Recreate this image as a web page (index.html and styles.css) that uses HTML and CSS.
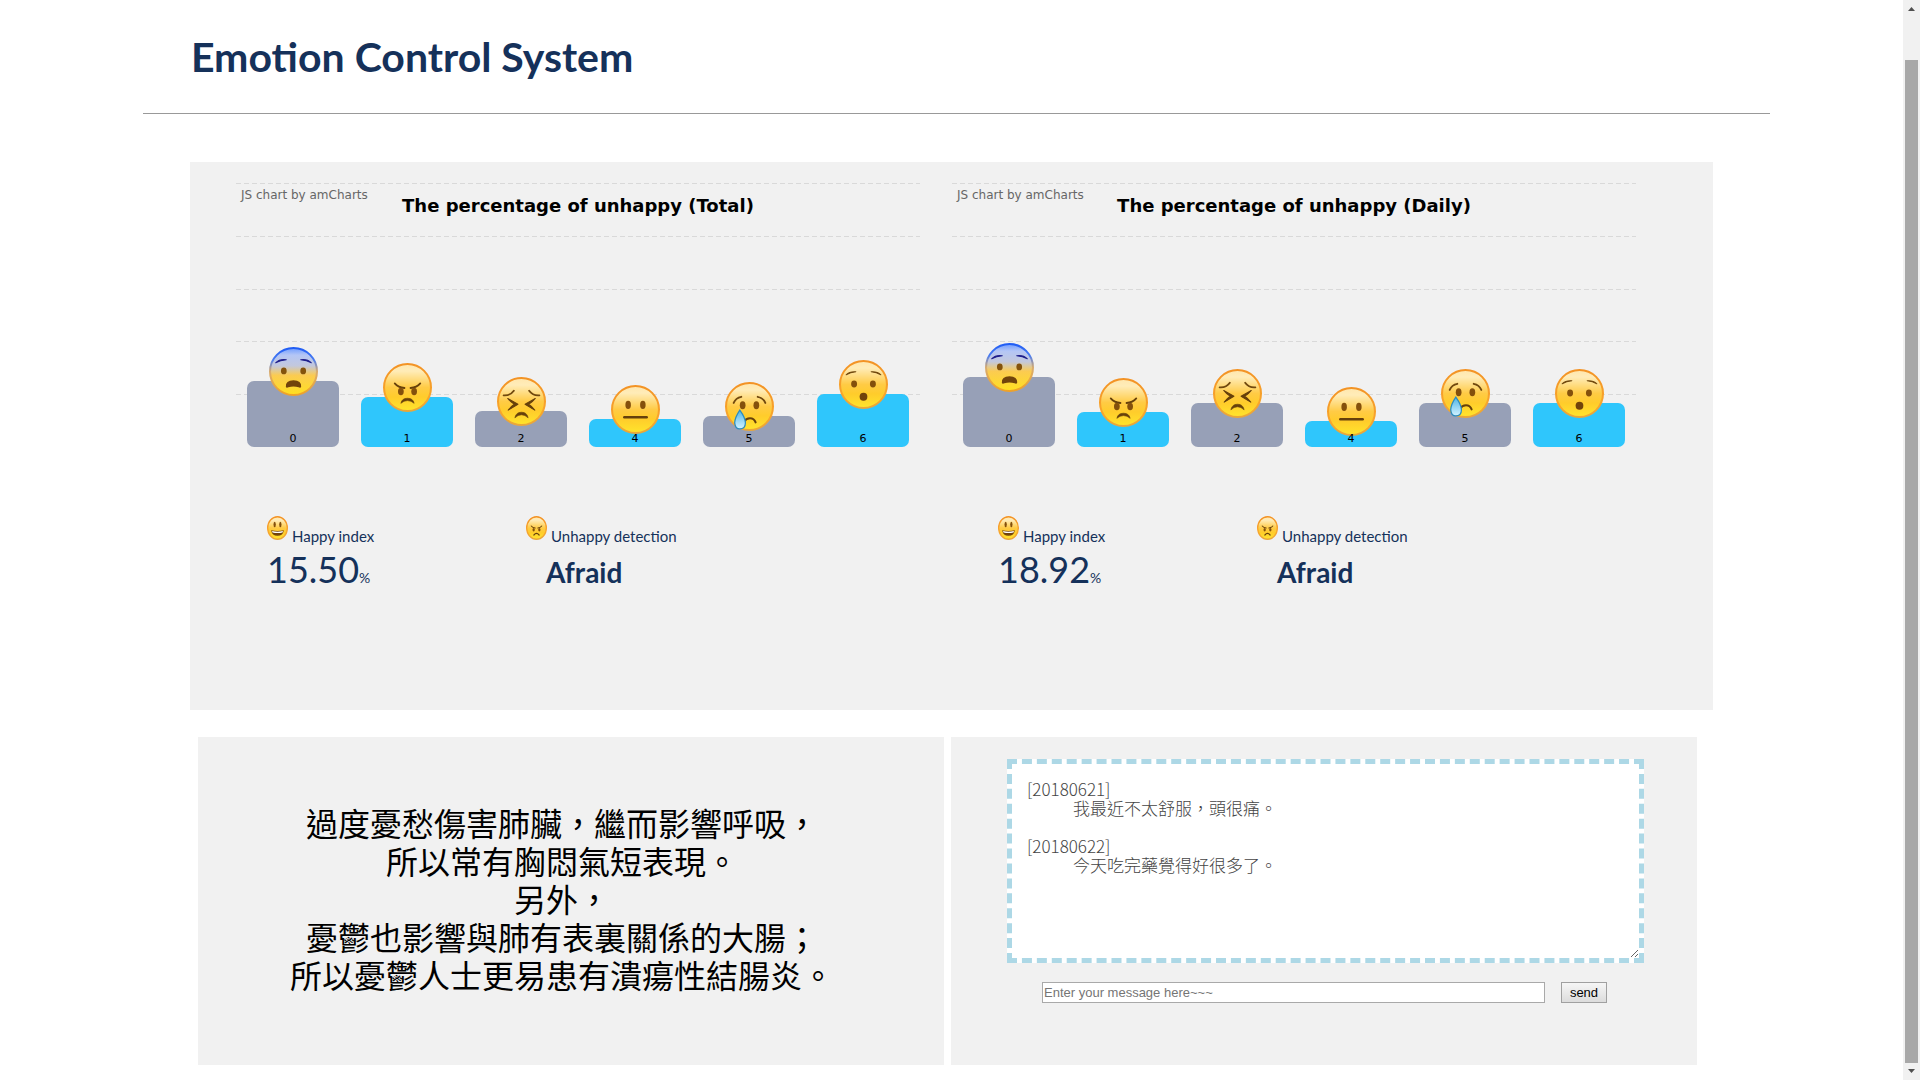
FILE: index.html
```html
<!DOCTYPE html>
<html lang="zh-Hant">
<head>
<meta charset="utf-8">
<title>Emotion Control System</title>
<link rel="stylesheet" href="styles.css">
</head>
<body>
<svg class="defs" aria-hidden="true">
  <defs>
    <linearGradient id="skin" x1="0" y1="0" x2="0" y2="1">
      <stop offset="0" stop-color="#ffe7ae"/><stop offset=".15" stop-color="#ffecb8"/><stop offset=".5" stop-color="#ffcb45"/><stop offset=".7" stop-color="#ffcc2b"/><stop offset="1" stop-color="#ffe52c"/>
    </linearGradient>
    <linearGradient id="rim" x1="0" y1="0" x2="0" y2="1">
      <stop offset="0" stop-color="#f39325"/><stop offset=".7" stop-color="#f8a52c"/><stop offset="1" stop-color="#e9a73a"/>
    </linearGradient>
    <linearGradient id="skin-fear" x1="0" y1="0" x2="0" y2="1">
      <stop offset="0" stop-color="#6f9cff"/><stop offset=".15" stop-color="#b4c6f6"/><stop offset=".38" stop-color="#c3c8dc"/><stop offset=".58" stop-color="#fbcb52"/><stop offset="1" stop-color="#ffe01f"/>
    </linearGradient>
    <linearGradient id="rim-fear" x1="0" y1="0" x2="0" y2="1">
      <stop offset="0" stop-color="#1f5cf5"/><stop offset=".25" stop-color="#4a7cf0"/><stop offset=".5" stop-color="#d8ac70"/><stop offset="1" stop-color="#efa227"/>
    </linearGradient>
    <linearGradient id="tear" x1="0" y1="0" x2="0" y2="1">
      <stop offset="0" stop-color="#4eb4e6"/><stop offset="1" stop-color="#d3f3ff"/>
    </linearGradient>
    <symbol id="afraid" viewBox="0 0 48 48">
      <circle cx="24" cy="24" r="23" fill="url(#skin-fear)" stroke="url(#rim-fear)" stroke-width="2"/>
      <path d="M6.500 15.500Q10.500 11.500 17 12.500Q11 12.800 6.500 15.500zM41.500 15.500Q37.500 11.500 31 12.500Q37 12.800 41.500 15.500z" fill="#20208c" stroke="#20208c" stroke-linejoin="round"/>
      <ellipse cx="14.500" cy="23.500" rx="2.800" ry="3.300" fill="#84530c"/><ellipse cx="33.500" cy="23.500" rx="2.800" ry="3.300" fill="#84530c"/>
      <path d="M16.500 39Q16 32.500 24 32.500Q32 32.500 31.500 39Q31 40.500 29 39.500Q24 38 19 39.500Q17 40.500 16.500 39z" fill="#71430b"/>
    </symbol>
    <symbol id="angry" viewBox="0 0 48 48">
      <circle cx="24" cy="24" r="23" fill="url(#skin)" stroke="url(#rim)" stroke-width="2"/>
      <path d="M11.500 20Q15 24 21 24.500M36.500 20Q33 24 27 24.500" fill="none" stroke="#66400b" stroke-width="1.800" stroke-linecap="round"/>
      <ellipse cx="17.500" cy="28" rx="2.800" ry="3.700" fill="#84500c"/><ellipse cx="30.500" cy="28" rx="2.800" ry="3.700" fill="#84500c"/>
      <path d="M17.500 39.500Q18.500 34.500 24 34.500Q29.500 34.500 30.500 39.500Q27.500 36.800 24 36.800Q20.500 36.800 17.500 39.500z" fill="#66400b" stroke="#66400b" stroke-width=".6"/>
    </symbol>
    <symbol id="disgust" viewBox="0 0 48 48">
      <circle cx="24" cy="24" r="23" fill="url(#skin)" stroke="url(#rim)" stroke-width="2"/>
      <path d="M6.500 18Q13 18.500 16.500 13.500M41.500 18Q35 18.500 31.500 13.500" fill="none" stroke="#71490e" stroke-width="1.800" stroke-linecap="round"/>
      <path d="M10.500 21L20.500 26.700L11 32.500Q14 28.500 17 26.700Q13.500 24.800 10.500 21zM37.500 21L27.500 26.700L37 32.500Q34 28.500 31 26.700Q34.500 24.800 37.500 21z" fill="#66400b" stroke="#66400b" stroke-linejoin="round"/>
      <path d="M17.500 40Q18.500 34.500 24 34.500Q29.500 34.500 30.500 40Q27.500 37 24 37Q20.500 37 17.500 40z" fill="#66400b" stroke="#66400b" stroke-width=".6"/>
    </symbol>
    <symbol id="neutral" viewBox="0 0 48 48">
      <circle cx="24" cy="24" r="23" fill="url(#skin)" stroke="url(#rim)" stroke-width="2"/>
      <ellipse cx="16.800" cy="19.500" rx="2.700" ry="4" fill="#84500c"/><ellipse cx="31.200" cy="19.500" rx="2.700" ry="4" fill="#84500c"/>
      <path d="M13 31.500H35" stroke="#66400b" stroke-width="2.400" stroke-linecap="round"/>
    </symbol>
    <symbol id="sad" viewBox="0 0 48 48">
      <circle cx="24" cy="24" r="23" fill="url(#skin)" stroke="url(#rim)" stroke-width="2"/>
      <path d="M8.500 20.500Q10.500 15.500 16 14.500M39.500 20.500Q37.500 15.500 32 14.500" fill="none" stroke="#71490e" stroke-width="1.800" stroke-linecap="round"/>
      <ellipse cx="17.300" cy="22.800" rx="2.800" ry="4" fill="#84500c"/><ellipse cx="30.700" cy="22.800" rx="2.800" ry="4" fill="#84500c"/>
      <path d="M19 38.500Q20.500 35.500 24.500 35.500Q28.500 35.500 30 39.500" fill="none" stroke="#66400b" stroke-width="2" stroke-linecap="round"/>
      <path d="M14.500 27.500Q9.500 35 9.500 40Q10 46 14.500 46Q20 46 20 40Q20 35 14.500 27.500z" fill="url(#tear)" stroke="#2c8cbd" stroke-width="1.200"/>
    </symbol>
    <symbol id="surprise" viewBox="0 0 48 48">
      <circle cx="24" cy="24" r="23" fill="url(#skin)" stroke="url(#rim)" stroke-width="2"/>
      <path d="M7 14.500Q10.500 11 16.500 11.500Q11 12 7 14.500zM41 14.500Q37.500 11 31.500 11.500Q37 12 41 14.500z" fill="#71490e" stroke="#71490e" stroke-linejoin="round"/>
      <ellipse cx="14.800" cy="23.500" rx="2.900" ry="3.400" fill="#84500c"/><ellipse cx="33.200" cy="23.500" rx="2.900" ry="3.400" fill="#84500c"/>
      <ellipse cx="24" cy="36" rx="3.800" ry="3.800" fill="#71430b"/>
    </symbol>
    <symbol id="happy" viewBox="0 0 48 48" preserveAspectRatio="none">
      <circle cx="24" cy="24" r="22.500" fill="url(#skin)" stroke="url(#rim)" stroke-width="3"/>
      <ellipse cx="17.500" cy="17" rx="2.600" ry="5.500" fill="#84500c"/><ellipse cx="30.500" cy="17" rx="2.600" ry="5.500" fill="#84500c"/>
      <path d="M9.500 28.500Q24 31 38.500 28.500Q36.500 39.500 24 39.500Q11.500 39.500 9.500 28.500z" fill="#71430b"/>
      <path d="M11.500 30.200Q24 32.500 36.500 30.200L35.500 33Q24 35 12.500 33z" fill="#fff"/>
    </symbol>
    <symbol id="angry-small" viewBox="0 0 48 48" preserveAspectRatio="none">
      <circle cx="24" cy="24" r="22.500" fill="url(#skin)" stroke="url(#rim)" stroke-width="3"/>
      <path d="M12 20Q15 23.500 21 24M36 20Q33 23.500 27 24" fill="none" stroke="#66400b" stroke-width="2.200" stroke-linecap="round"/>
      <ellipse cx="17.500" cy="27.500" rx="2.600" ry="3.500" fill="#84500c"/><ellipse cx="30.500" cy="27.500" rx="2.600" ry="3.500" fill="#84500c"/>
      <path d="M18 38Q24 31.500 30 38" fill="none" stroke="#66400b" stroke-width="2.600" stroke-linecap="round"/>
    </symbol>
  </defs>
</svg>

<div class="window">
  <main class="page">
    <header class="header">
      <h1 class="title">Emotion Control System</h1>
    </header>

    <section class="panel overview">
      <div class="charts">
        <figure class="chart">
          <div class="gridlines"><i></i><i></i><i></i><i></i><i></i></div>
          <figcaption class="chart-head">
            <a class="credit" href="#">JS chart by amCharts</a>
            <h2 class="chart-title">The percentage of unhappy (Total)</h2>
          </figcaption>
          <div class="bars">
            <div class="bar" style="height:66px"><svg class="face"><use href="#afraid"/></svg><span class="bar-label">0</span></div>
            <div class="bar blue" style="height:50px"><svg class="face"><use href="#angry"/></svg><span class="bar-label">1</span></div>
            <div class="bar" style="height:36px"><svg class="face"><use href="#disgust"/></svg><span class="bar-label">2</span></div>
            <div class="bar blue" style="height:28px"><svg class="face"><use href="#neutral"/></svg><span class="bar-label">4</span></div>
            <div class="bar" style="height:31px"><svg class="face"><use href="#sad"/></svg><span class="bar-label">5</span></div>
            <div class="bar blue" style="height:53px"><svg class="face"><use href="#surprise"/></svg><span class="bar-label">6</span></div>
          </div>
        </figure>
        <figure class="chart">
          <div class="gridlines"><i></i><i></i><i></i><i></i><i></i></div>
          <figcaption class="chart-head">
            <a class="credit" href="#">JS chart by amCharts</a>
            <h2 class="chart-title">The percentage of unhappy (Daily)</h2>
          </figcaption>
          <div class="bars">
            <div class="bar" style="height:70px"><svg class="face"><use href="#afraid"/></svg><span class="bar-label">0</span></div>
            <div class="bar blue" style="height:35px"><svg class="face"><use href="#angry"/></svg><span class="bar-label">1</span></div>
            <div class="bar" style="height:44px"><svg class="face"><use href="#disgust"/></svg><span class="bar-label">2</span></div>
            <div class="bar blue" style="height:26px"><svg class="face"><use href="#neutral"/></svg><span class="bar-label">4</span></div>
            <div class="bar" style="height:44px"><svg class="face"><use href="#sad"/></svg><span class="bar-label">5</span></div>
            <div class="bar blue" style="height:44px"><svg class="face"><use href="#surprise"/></svg><span class="bar-label">6</span></div>
          </div>
        </figure>
      </div>

      <div class="stats">
        <div class="stat-pair">
          <div class="stat">
            <div class="stat-name"><svg class="icon"><use href="#happy"/></svg><span>Happy index</span></div>
            <div class="stat-value">15.50<small>%</small></div>
          </div>
          <div class="stat">
            <div class="stat-name"><svg class="icon"><use href="#angry-small"/></svg><span>Unhappy detection</span></div>
            <div class="stat-value"><strong>Afraid</strong></div>
          </div>
        </div>
        <div class="stat-pair">
          <div class="stat">
            <div class="stat-name"><svg class="icon"><use href="#happy"/></svg><span>Happy index</span></div>
            <div class="stat-value">18.92<small>%</small></div>
          </div>
          <div class="stat">
            <div class="stat-name"><svg class="icon"><use href="#angry-small"/></svg><span>Unhappy detection</span></div>
            <div class="stat-value"><strong>Afraid</strong></div>
          </div>
        </div>
      </div>
    </section>

    <div class="lower">
      <section class="panel advice">
        <p>過度憂愁傷害肺臟，繼而影響呼吸，<br>所以常有胸悶氣短表現。<br>另外，<br>憂鬱也影響與肺有表裏關係的大腸；<br>所以憂鬱人士更易患有潰瘍性結腸炎。</p>
      </section>
      <section class="panel diary">
        <textarea class="log" aria-label="Diary">[20180621]
&#9;我最近不太舒服，頭很痛。

[20180622]
&#9;今天吃完藥覺得好很多了。</textarea>
        <form class="composer">
          <input class="message" type="text" aria-label="Message" placeholder="Enter your message here~~~">
          <button class="send" type="button">send</button>
        </form>
      </section>
    </div>
  </main>

  <div class="scrollbar" aria-hidden="true">
    <svg class="arrow" viewBox="0 0 17 17"><path d="M5 11L8.500 7L12 11z"/></svg>
    <div class="thumb"></div>
    <svg class="arrow" viewBox="0 0 17 17"><path d="M5 6L8.500 10L12 6z"/></svg>
  </div>
</div>
</body>
</html>
```
FILE: styles.css
```css
* { box-sizing: border-box; }
body { margin: 0; background: #fff; color: #15315a; font-family: Lato, sans-serif; }
h1, h2, p, figure { margin: 0; }
.defs { position: absolute; width: 0; height: 0; }

.window { display: flex; min-height: 100vh; }
.page { flex: 1; min-width: 0; }
.panel { background: #f1f1f1; }

/* header */
.header { margin: 0 133px 0 143px; padding: 32px 48px; border-bottom: 1px solid #999; }
.title { font-size: 41px; line-height: 49px; font-weight: 700; }

/* charts */
.overview { margin: 48px 190px 0; padding: 21px 77px 109px 46px; }
.charts { display: grid; grid-template-columns: 1fr 1fr; gap: 32px; font-family: "DejaVu Sans", sans-serif; color: #000; }
.chart { display: grid; height: 264px; }
.chart > * { grid-area: 1 / 1; }
.gridlines { display: grid; grid-template-rows: repeat(5, 1fr); }
.gridlines i { height: 1px; background: repeating-linear-gradient(90deg, #d9d9d9 0 5px, transparent 5px 8px); }
.chart-head { display: grid; padding: 4px 5px; align-content: start; }
.credit { color: #666; font-size: 12px; line-height: 16px; text-decoration: none; justify-self: start; }
.chart-title { font-size: 18px; line-height: 20px; font-weight: 700; text-align: center; margin-top: -7px; }
.bars { display: grid; grid-template-columns: repeat(6, 1fr); align-items: end; justify-items: center; }
.bar { position: relative; width: 80%; display: flex; align-items: flex-end; justify-content: center; border-radius: 7px; background: #97a0b7; }
.bar.blue { background: #2fc6fc; }
.face { position: absolute; top: -34px; width: 49px; height: 49px; }
.bar-label { position: relative; font-size: 11px; line-height: 16px; }

/* summary figures */
.stats { display: grid; grid-template-columns: 1fr 1fr; gap: 16px; margin: 69px -77px 0 31px; }
.stat-pair { display: grid; grid-template-columns: 259px 1fr; }
.stat-name { display: flex; gap: 4px; align-items: flex-end; font-size: 15px; line-height: 20px; }
.icon { width: 21px; height: 24px; margin-bottom: 6px; }
.stat-value { font-size: 36px; line-height: 46px; }
.stat-value small { font-size: 14px; }
.stat-value strong { font-size: 28px; margin-left: 20px; }

/* lower panels */
.lower { display: grid; grid-template-columns: 1fr 1fr; gap: 7px; margin: 27px 206px 15px 198px; }
.advice { padding: 69px 18px 0 0; color: #000; font-family: "Liberation Sans", "Noto Sans CJK TC", sans-serif; font-size: 32px; line-height: 38px; text-align: center; }
.diary { padding: 22px 53px 62px 56px; }
.log { display: block; width: 100%; height: 204px; margin: 0; padding: 15px; border: 5px dashed #add8e6; background: #fff; color: #444; font: 300 17px/19px "Noto Sans CJK TC", sans-serif; tab-size: 46px; resize: both; }
.composer { display: flex; gap: 16px; margin: 19px 37px 0 35px; }
.message { flex: 1; min-width: 0; height: 21px; padding: 0 1px; border: 1px solid #a9a9a9; background: #fff; font: 13px "Liberation Sans", sans-serif; }
.message::placeholder { color: #757575; }
.send { width: 46px; height: 21px; padding: 0; border: 1px solid #a0a0a0; background: linear-gradient(#f6f6f6, #dcdcdc); color: #000; font: 13px "Liberation Sans", sans-serif; }

/* scroll bar */
.scrollbar { display: flex; flex-direction: column; width: 17px; background: #f1f1f1; }
.arrow { width: 17px; height: 17px; fill: #505050; }
.thumb { flex: 1; margin: 43px 2px 0; background: #a8a8a8; }
```
